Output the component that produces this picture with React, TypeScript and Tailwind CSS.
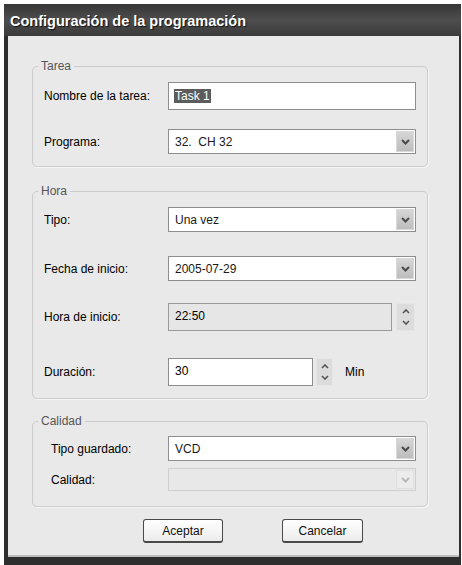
const Chevron = ({ light }: { light?: boolean }) => (
  <svg width="9" height="6" viewBox="0 0 9 6">
    <path d="M1 1l3.5 3.5L8 1" stroke={light ? "#b8b8b8" : "#4a4a4a"} strokeWidth="2" fill="none" />
  </svg>
);

const Select = ({ value, disabled }: { value?: string; disabled?: boolean }) => (
  <div
    className={
      disabled
        ? "h-[23px] w-[248px] flex items-center border border-[#cfcfcf] bg-[#e8e8e8] pl-[6px] pr-[1px]"
        : "h-[25px] w-[248px] flex items-center border border-[#8e8e8e] bg-white pl-[6px] pr-[1px]"
    }
  >
    <span className="flex-1 whitespace-pre text-[#1a1a1a]">{value}</span>
    <div
      className={
        disabled
          ? "w-[18px] h-[19px] bg-[#ececec] border border-[#e0e0e0] flex items-center justify-center"
          : "w-[18px] h-[21px] bg-gradient-to-b from-[#d6d6d6] to-[#bdbdbd] border border-[#d8d8d8] flex items-center justify-center"
      }
    >
      <Chevron light={disabled} />
    </div>
  </div>
);

const Spinner = ({ w }: { w: string }) => (
  <div className={`${w} h-[28px] bg-[#dcdcdc] border border-[#e6e6e6] flex flex-col items-center justify-center gap-[6px]`}>
    <svg width="8" height="5" viewBox="0 0 8 5">
      <path d="M1 4l3-3 3 3" stroke="#555" strokeWidth="1.6" fill="none" />
    </svg>
    <svg width="8" height="5" viewBox="0 0 8 5">
      <path d="M1 1l3 3 3-3" stroke="#555" strokeWidth="1.6" fill="none" />
    </svg>
  </div>
);

const Group = ({ title, children, pt }: { title: string; children: React.ReactNode; pt: string }) => (
  <fieldset className="w-[396px] border border-[#cccccc] rounded-[5px] shadow-[1px_1px_0_#f6f6f6]">
    <legend className="ml-[5px] px-[3px] leading-[14px] text-[#555]">{title}</legend>
    <div className={`${pt} flex flex-col`}>{children}</div>
  </fieldset>
);

export default function App() {
  return (
    <div
      className="w-[462px] h-[565px] bg-white pt-[4px] pl-[4px] pr-[1px] text-[12px]"
      style={{ fontFamily: '"Liberation Sans", Arial, sans-serif' }}
    >
      <div className="h-full flex flex-col bg-[#2e2e2e]">
        {/* title bar */}
        <div className="h-[32px] flex items-center pl-[6px] pt-[3px] bg-gradient-to-b from-[#363636] via-[#4e4e4e] to-[#3a3a3a]">
          <span className="text-white font-bold text-[14.5px] [text-shadow:1px_1px_1px_#111]">
            Configuración de la programación
          </span>
        </div>
        <div className="flex-1 flex flex-col bg-[#e9e9e9] ml-[4px] mr-[2px] mb-[8px] border-b-2 border-[#bdbdbd] pl-[24px] pt-[23px]">
          {/* Tarea */}
          <Group title="Tarea" pt="pt-[9px]">
            <div className="pl-[11px] flex flex-col gap-[19px] pb-[12px]">
              <div className="flex items-center">
                <span className="w-[124px]">Nombre de la tarea:</span>
                <div className="h-[28px] w-[248px] border border-[#8e8e8e] bg-white pl-[5px] flex items-center">
                  <span className="bg-[#5c5c5c] text-white px-[1px] leading-[14px]">Task 1</span>
                </div>
              </div>
              <div className="flex items-center">
                <span className="w-[124px]">Programa:</span>
                <Select value="32.  CH 32" />
              </div>
            </div>
          </Group>

          {/* Hora */}
          <div className="mt-[17px]">
            <Group title="Hora" pt="pt-[9px]">
              <div className="pl-[11px] flex flex-col pb-[12px]">
                <div className="flex items-center">
                  <span className="w-[124px]">Tipo:</span>
                  <Select value="Una vez" />
                </div>
                <div className="flex items-center mt-[24px]">
                  <span className="w-[124px]">Fecha de inicio:</span>
                  <Select value="2005-07-29" />
                </div>
                <div className="flex items-center mt-[22px]">
                  <span className="w-[124px]">Hora de inicio:</span>
                  <div className="h-[28px] w-[224px] border border-[#9a9a9a] bg-[#e6e6e6] pl-[6px] pt-[3px]">
                    22:50
                  </div>
                  <div className="ml-[4px]">
                    <Spinner w="w-[19px]" />
                  </div>
                </div>
                <div className="flex items-center mt-[27px]">
                  <span className="w-[124px]">Duración:</span>
                  <div className="h-[28px] w-[145px] border border-[#8e8e8e] bg-white pl-[6px] pt-[3px]">
                    30
                  </div>
                  <div className="ml-[3px]">
                    <Spinner w="w-[17px]" />
                  </div>
                  <span className="ml-[12px]">Min</span>
                </div>
              </div>
            </Group>
          </div>

          {/* Calidad */}
          <div className="mt-[15px]">
            <Group title="Calidad" pt="pt-[8px]">
              <div className="pl-[18px] flex flex-col gap-[7px] pb-[15px]">
                <div className="flex items-center">
                  <span className="w-[117px]">Tipo guardado:</span>
                  <Select value="VCD" />
                </div>
                <div className="flex items-center">
                  <span className="w-[117px]">Calidad:</span>
                  <Select disabled />
                </div>
              </div>
            </Group>
          </div>

          {/* buttons */}
          <div className="flex mt-[12px] pl-[111px] gap-[59px]">
            <button className="w-[80px] h-[24px] rounded-[3px] border border-[#4a4a4a] border-b-2 bg-gradient-to-b from-white to-[#ececec] text-[12px] text-[#111]">
              Aceptar
            </button>
            <button className="w-[81px] h-[24px] rounded-[3px] border border-[#4a4a4a] border-b-2 bg-gradient-to-b from-white to-[#ececec] text-[12px] text-[#111]">
              Cancelar
            </button>
          </div>
        </div>
      </div>
    </div>
  );
}
